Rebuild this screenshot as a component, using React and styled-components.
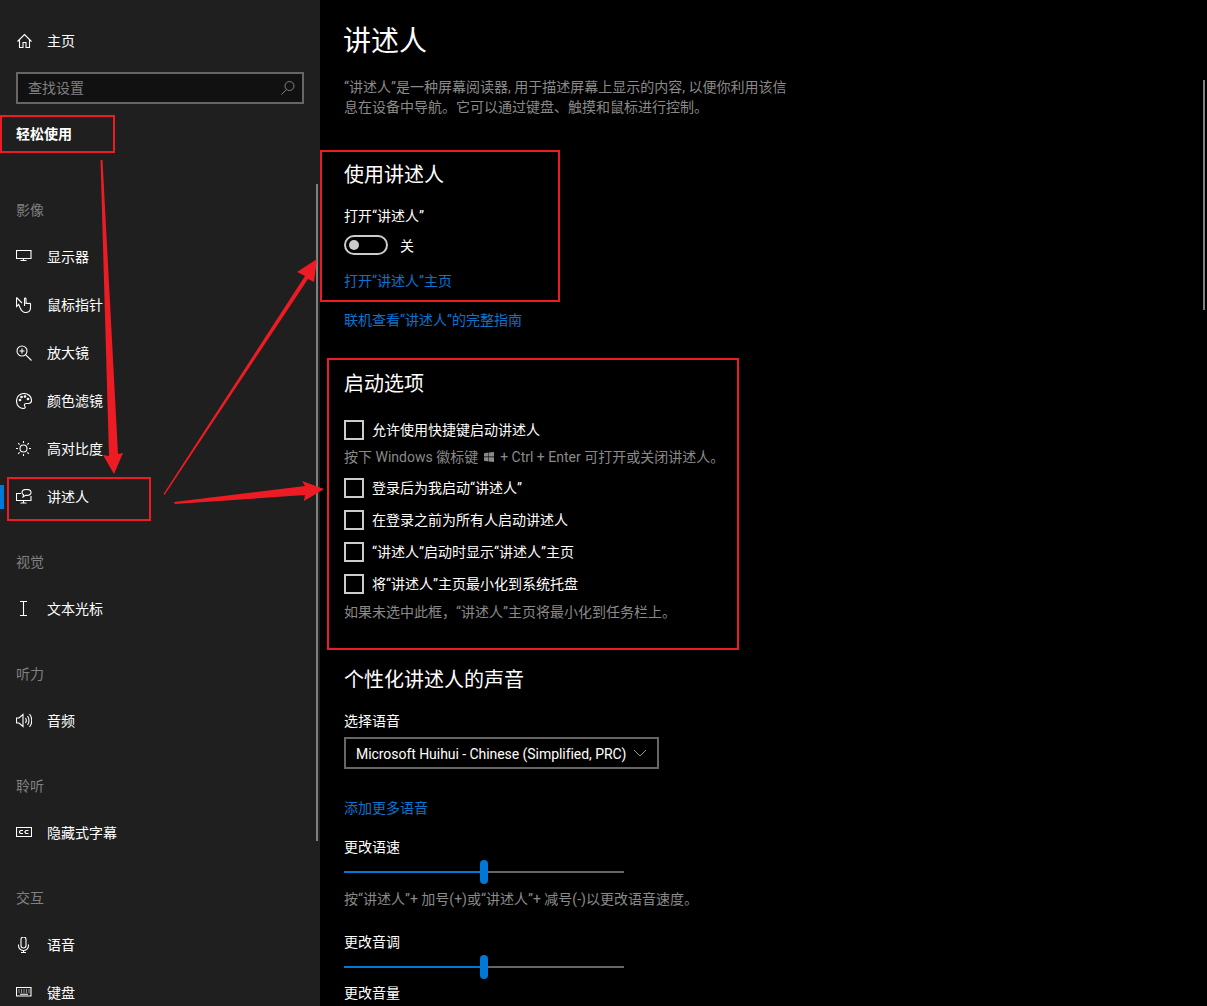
import React from "react";
import styled, { createGlobalStyle, css } from "styled-components";

const GlobalStyle = createGlobalStyle`
  html, body {
    margin: 0;
    padding: 0;
    background: #000;
  }
  body {
    font-family: Roboto, "Noto Sans CJK SC", sans-serif;
    font-size: 14px;
    color: #fff;
  }
`;

const nudgeDown = css`
  padding-top: 1px;
  margin-bottom: -1px;
`;

const Page = styled.div`
  position: relative;
  display: flex;
  width: 1207px;
  height: 1006px;
  overflow: hidden;
  background: #000;
`;

/* ---- left nav ---- */
const Sidebar = styled.nav`
  position: relative;
  flex: 0 0 320px;
  height: 1006px;
  padding-top: 17px;
  box-sizing: border-box;
  overflow: hidden;
  background: #1f1f1f;
`;

const NavRow = styled.div`
  position: relative;
  display: flex;
  align-items: center;
  gap: 15px;
  height: 48px;
  padding-left: 16px;
  flex-shrink: 0;
  font-size: 14px;
  line-height: 20px;
  color: #fff;
`;

const ActiveMark = styled.span`
  position: absolute;
  left: 0;
  top: 12px;
  width: 4px;
  height: 24px;
  background: #0078d7;
`;

const SearchBox = styled.div`
  display: flex;
  align-items: center;
  justify-content: space-between;
  box-sizing: border-box;
  width: 288px;
  height: 32px;
  margin: 7px 0 0 16px;
  padding: 0 6px 0 10px;
  border: 2px solid #666;
  background: #111;
  color: #808080;
  font-size: 14px;

  span {
    padding-bottom: 3px;
  }
`;

const CategoryTitle = styled.div`
  height: 38px;
  margin-top: 11px;
  padding-left: 16px;
  font-size: 14px;
  font-weight: 700;
  line-height: 38px;
  color: #fff;
`;

const GroupHead = styled.div`
  height: 46px;
  margin-top: ${(p) => p.$top || 18}px;
  padding-left: 16px;
  font-size: 14px;
  line-height: 46px;
  color: #808080;
`;

const SideScroll = styled.span`
  position: absolute;
  left: 316px;
  top: 184px;
  width: 2px;
  height: 657px;
  background: #808080;
`;

/* ---- right pane ---- */
const Content = styled.main`
  position: relative;
  flex: 1;
  height: 1006px;
  padding: 22px 0 0 24px;
  box-sizing: border-box;
  overflow: hidden;
  background: #000;
`;

const Title = styled.h1`
  margin: 0 0 0 -1px;
  font-size: 28px;
  font-weight: 400;
  line-height: 40px;
`;

const Description = styled.p`
  width: 450px;
  margin: 16px 0 0;
  font-size: 14px;
  line-height: 19.5px;
  color: #8a8a8a;
`;

const Heading = styled.h2`
  margin: ${(p) => p.$top}px 0 0;
  font-size: 20px;
  font-weight: 400;
  line-height: 28px;
`;

const Label = styled.div`
  ${nudgeDown}
  margin-top: ${(p) => p.$top}px;
  font-size: 14px;
  line-height: 20px;
`;

const Hint = styled.div`
  ${nudgeDown}
  margin-top: ${(p) => p.$top}px;
  display: flex;
  align-items: center;
  font-size: 14px;
  line-height: 20px;
  color: #8a8a8a;
`;

const Link = styled.a`
  ${nudgeDown}
  display: block;
  margin-top: ${(p) => p.$top}px;
  font-size: 14px;
  line-height: 20px;
  color: #0a74cf;
`;

const ToggleRow = styled.div`
  display: flex;
  align-items: center;
  gap: 12px;
  height: 20px;
  margin-top: 10px;
  font-size: 14px;
`;

const Toggle = styled.span`
  display: flex;
  align-items: center;
  box-sizing: border-box;
  width: 44px;
  height: 20px;
  padding-left: 3px;
  border: 2px solid #ccc;
  border-radius: 10px;

  &::before {
    content: "";
    width: 10px;
    height: 10px;
    border-radius: 50%;
    background: #ccc;
  }
`;

const CheckRow = styled.div`
  display: flex;
  align-items: center;
  gap: 8px;
  height: 20px;
  margin-top: ${(p) => p.$top}px;
  font-size: 14px;

  span:last-child {
    padding-bottom: 3px;
  }
`;

const CheckBox = styled.i`
  flex: 0 0 20px;
  box-sizing: border-box;
  width: 20px;
  height: 20px;
  border: 2px solid #ccc;
`;

const Select = styled.div`
  display: flex;
  align-items: center;
  justify-content: space-between;
  box-sizing: border-box;
  width: 315px;
  height: 32px;
  margin-top: 7px;
  padding: 0 10px;
  border: 2px solid #666;
  font-size: 14px;
  letter-spacing: -0.05px;

  span {
    padding-top: 2px;
  }
`;

const Slider = styled.div`
  position: relative;
  display: flex;
  align-items: center;
  width: 280px;
  height: 24px;
  margin-top: 4px;
  background: linear-gradient(#666, #666) no-repeat center / 100% 2px;

  &::before {
    content: "";
    width: 50%;
    height: 2px;
    background: #0078d7;
  }
`;

const Thumb = styled.span`
  position: absolute;
  left: 136px;
  top: 0;
  width: 8px;
  height: 24px;
  border-radius: 4px;
  background: #0078d7;
`;

const MainScroll = styled.span`
  position: absolute;
  right: 2px;
  top: 80px;
  width: 2px;
  height: 230px;
  background: #808080;
`;

const WinLogo = styled.svg`
  margin: 0 6px;
`;

/* ---- red annotations drawn on top of the screenshot ---- */
const Callout = styled.div`
  position: absolute;
  left: ${(p) => p.$x}px;
  top: ${(p) => p.$y}px;
  width: ${(p) => p.$w}px;
  height: ${(p) => p.$h}px;
  box-sizing: border-box;
  border: 2px solid #ed1c24;
  pointer-events: none;
`;

const ArrowLayer = styled.svg`
  position: absolute;
  left: 0;
  top: 0;
  pointer-events: none;
`;

const Icon = ({ children }) => (
  <svg
    width="16"
    height="16"
    viewBox="0 0 16 16"
    fill="none"
    stroke="#fff"
    strokeWidth="1.1"
    style={{ flexShrink: 0 }}
  >
    {children}
  </svg>
);

const icons = {
  home: (
    <Icon>
      <path d="M1.500 8.500 8.500 1.500l7 7M3.500 6.500v8h3.500v-5h3v5h3.500v-8" />
    </Icon>
  ),
  display: (
    <Icon>
      <path d="M.5 1.500h14.500v8H.5zM7.500 9.500v2M4.500 11.500h6" />
    </Icon>
  ),
  pointer: (
    <Icon>
      <path d="M.5 .5v9l2.200-2 1.500 3.500M.5 .5 6 6" />
      <path d="M4.200 11c1.300 3 2.800 4.500 5.300 4.500 3 0 5-1.500 5-4.500V7c0-1-1.500-1-1.500 0 0-1-1.500-1-1.500 0 0-1-1.500-1-1.500 0V2c0-1.200-1.500-1.200-1.500 0v7" />
    </Icon>
  ),
  magnifier: (
    <Icon>
      <circle cx="6" cy="6" r="5" />
      <path d="M9.800 9.800 15.500 15.500M3.500 6h5M6 3.500v5" />
    </Icon>
  ),
  palette: (
    <Icon>
      <path d="M8 .5C3.500 .5.500 3.700.500 8c0 4.200 3 7.500 7 7.500 2 0 2-1.500 1.200-2.500-.8-1.200 0-2.500 1.500-2.500h2.300c1.700 0 3-1 3-3C15.500 3.500 12.500 .5 8 .5z" />
      <circle cx="4" cy="7" r=".8" fill="#fff" />
      <circle cx="5.500" cy="4" r=".8" fill="#fff" />
      <circle cx="9" cy="3.500" r=".8" fill="#fff" />
      <circle cx="12" cy="6" r=".8" fill="#fff" />
    </Icon>
  ),
  contrast: (
    <Icon>
      <circle cx="7.500" cy="7.500" r="3.500" />
      <path d="M7.500 0v2M7.500 13v2M0 7.500h2M13 7.500h2M2.200 2.200l1.400 1.400M11.400 11.400l1.400 1.400M2.200 12.800l1.400-1.400M11.400 3.600l1.400-1.400" />
    </Icon>
  ),
  narrator: (
    <Icon>
      <path d="M5 4.500H.5v7h14.500V7M7.500 11.500v2.500M4.500 14h6" />
      <path d="M10.500 .5c-2.500 0-4.500 1.200-4.500 3 0 1 .6 1.800 1.500 2.300L7 8l2.500-1.600h1c2.700 0 4.500-1.200 4.500-3s-2-2.900-4.500-2.900z" />
    </Icon>
  ),
  cursor: (
    <Icon>
      <path d="M4 .5h7M4 14.500h7M7.500 .5v14" />
    </Icon>
  ),
  audio: (
    <Icon>
      <path d="M.5 5v5h2.500L7 13.500V1.500L3 5zM9.500 5c1 1.500 1 3.500 0 5M11.500 3c2 2.500 2 6.500 0 9M13.500 1c3 3.500 3 9.500 0 13" />
    </Icon>
  ),
  captions: (
    <Icon>
      <path d="M.5 2.500h15v9H.5z" />
      <path d="M7 5.500H4.500L3.500 6.500v1l1 1H7M12.500 5.500H10L9 6.500v1l1 1h2.500" />
    </Icon>
  ),
  speech: (
    <Icon>
      <path d="M5 2.500a2.500 2.500 0 0 1 5 0v6a2.500 2.500 0 0 1-5 0zM2.500 7.500v1a5 5 0 0 0 10 0v-1M7.500 13.500v2M5 15.500h5" />
    </Icon>
  ),
  keyboard: (
    <Icon>
      <path d="M.5 2.500h14.500v8.500H.5z" />
      <path d="M2.500 5h1M5 5h1M7.500 5h1M10 5h1M12.500 5h1M2.500 7h1M5 7h1M7.500 7h1M10 7h1M12.500 7h1M4 9.200h8" />
    </Icon>
  ),
};

const NavItem = ({ icon, label, active }) => (
  <NavRow>
    {active && <ActiveMark />}
    {icons[icon]}
    <span>{label}</span>
  </NavRow>
);

const SpeedSlider = () => (
  <Slider>
    <Thumb />
  </Slider>
);

const Option = ({ top = 12, children }) => (
  <CheckRow $top={top}>
    <CheckBox />
    <span>{children}</span>
  </CheckRow>
);

export default function App() {
  return (
    <Page>
      <GlobalStyle />
      <Sidebar>
        <NavItem icon="home" label="主页" />
        <SearchBox>
          <span>查找设置</span>
          <svg width="16" height="16" viewBox="0 0 16 16" fill="none" stroke="#808080">
            <circle cx="9.500" cy="6" r="4.500" />
            <path d="M6.500 9.500 1.500 14.500" />
          </svg>
        </SearchBox>
        <CategoryTitle>轻松使用</CategoryTitle>

        <GroupHead $top={34}>影像</GroupHead>
        <NavItem icon="display" label="显示器" />
        <NavItem icon="pointer" label="鼠标指针" />
        <NavItem icon="magnifier" label="放大镜" />
        <NavItem icon="palette" label="颜色滤镜" />
        <NavItem icon="contrast" label="高对比度" />
        <NavItem icon="narrator" label="讲述人" active />

        <GroupHead>视觉</GroupHead>
        <NavItem icon="cursor" label="文本光标" />

        <GroupHead>听力</GroupHead>
        <NavItem icon="audio" label="音频" />

        <GroupHead>聆听</GroupHead>
        <NavItem icon="captions" label="隐藏式字幕" />

        <GroupHead>交互</GroupHead>
        <NavItem icon="speech" label="语音" />
        <NavItem icon="keyboard" label="键盘" />

        <SideScroll />
      </Sidebar>

      <Content>
        <Title>讲述人</Title>
        <Description>
          “讲述人”是一种屏幕阅读器, 用于描述屏幕上显示的内容, 以便你利用该信息在设备中导航。它可以通过键盘、触摸和鼠标进行控制。
        </Description>

        <Heading $top={44}>使用讲述人</Heading>
        <Label $top={16}>打开“讲述人”</Label>
        <ToggleRow>
          <Toggle />
          <span>关</span>
        </ToggleRow>
        <Link $top={15}>打开“讲述人”主页</Link>
        <Link $top={19}>联机查看“讲述人”的完整指南</Link>

        <Heading $top={41}>启动选项</Heading>
        <Option top={22}>允许使用快捷键启动讲述人</Option>
        <Hint $top={6}>
          按下 Windows 徽标键
          <WinLogo width="10" height="10" viewBox="0 0 10 10" fill="#8a8a8a">
            <path d="M0 1.300 4.500.6v4H0zM5 .5 10 0v4.600H5zM0 5.200h4.500v4.200L0 8.700zM5 5.200h5V10l-5-.6z" />
          </WinLogo>
          + Ctrl + Enter 可打开或关闭讲述人。
        </Hint>
        <Option>登录后为我启动“讲述人”</Option>
        <Option>在登录之前为所有人启动讲述人</Option>
        <Option>“讲述人”启动时显示“讲述人”主页</Option>
        <Option>将“讲述人”主页最小化到系统托盘</Option>
        <Hint $top={7}>如果未选中此框，“讲述人”主页将最小化到任务栏上。</Hint>

        <Heading $top={45}>个性化讲述人的声音</Heading>
        <Label $top={16}>选择语音</Label>
        <Select>
          <span>Microsoft Huihui - Chinese (Simplified, PRC)</span>
          <svg width="14" height="8" viewBox="0 0 14 8" fill="none" stroke="#999">
            <path d="M1 1l6 6 6-6" />
          </svg>
        </Select>
        <Link $top={28}>添加更多语音</Link>
        <Label $top={19}>更改语速</Label>
        <SpeedSlider />
        <Hint $top={4}>按“讲述人”+ 加号(+)或“讲述人”+ 减号(-)以更改语音速度。</Hint>
        <Label $top={23}>更改音调</Label>
        <SpeedSlider />
        <Label $top={3}>更改音量</Label>

        <MainScroll />
      </Content>

      <Callout $x={0} $y={115} $w={115} $h={38} />
      <Callout $x={7} $y={477} $w={144} $h={44} />
      <Callout $x={320} $y={150} $w={240} $h={152} />
      <Callout $x={327} $y={358} $w={412} $h={292} />
      <ArrowLayer width="1207" height="1006" fill="#ed1c24">
        <polygon points="100.500,160 102.500,160 118,454 123,453 114,474 103,455 109,456" />
        <polygon points="163.500,494 305,276 297,272 317,259 314,282 308,279 164.500,495" />
        <polygon points="174,502 305,486 302,481 324,489 304,501 305,495 175,504" />
      </ArrowLayer>
    </Page>
  );
}
